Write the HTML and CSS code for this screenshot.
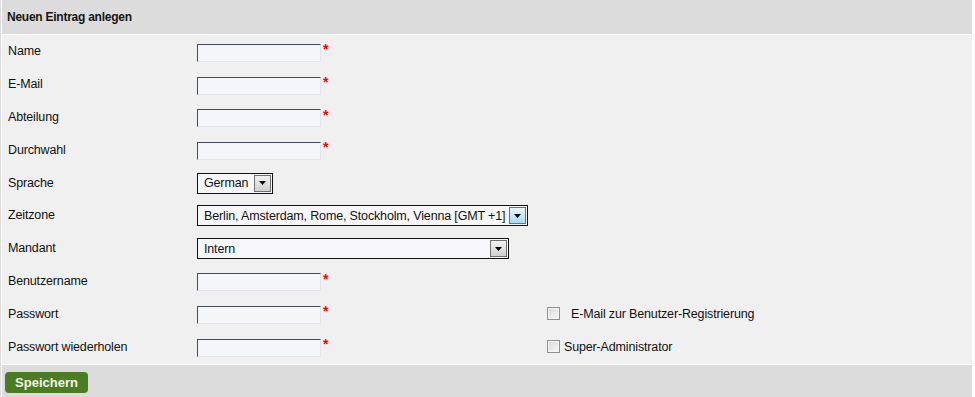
FILE: index.html
```html
<!DOCTYPE html>
<html lang="de">
<head>
<meta charset="utf-8">
<title>Neuen Eintrag anlegen</title>
<link rel="stylesheet" href="styles.css">
</head>
<body>
<div class="panel">
  <div class="head">Neuen Eintrag anlegen</div>
  <div class="form">
    <div class="lbl">Name</div>
    <div class="fld"><span class="inp"></span><span class="req">*</span></div>
    <div class="ext"></div>

    <div class="lbl">E-Mail</div>
    <div class="fld"><span class="inp"></span><span class="req">*</span></div>
    <div class="ext"></div>

    <div class="lbl">Abteilung</div>
    <div class="fld"><span class="inp"></span><span class="req">*</span></div>
    <div class="ext"></div>

    <div class="lbl">Durchwahl</div>
    <div class="fld"><span class="inp"></span><span class="req">*</span></div>
    <div class="ext"></div>

    <div class="lbl">Sprache</div>
    <div class="fld"><div class="sel sel-lang"><span class="sel-text">German</span><span class="sel-btn"><svg width="7" height="4" viewBox="0 0 7 4"><path d="M0 0h7L3.5 4z" fill="#000"/></svg></span></div></div>
    <div class="ext"></div>

    <div class="lbl">Zeitzone</div>
    <div class="fld"><div class="sel sel-tz"><span class="sel-text">Berlin, Amsterdam, Rome, Stockholm, Vienna [GMT +1]</span><span class="sel-btn sel-btn-hot"><svg width="7" height="4" viewBox="0 0 7 4"><path d="M0 0h7L3.5 4z" fill="#000"/></svg></span></div></div>
    <div class="ext"></div>

    <div class="lbl">Mandant</div>
    <div class="fld"><div class="sel sel-mand"><span class="sel-text">Intern</span><span class="sel-btn"><svg width="7" height="4" viewBox="0 0 7 4"><path d="M0 0h7L3.5 4z" fill="#000"/></svg></span></div></div>
    <div class="ext"></div>

    <div class="lbl">Benutzername</div>
    <div class="fld"><span class="inp"></span><span class="req">*</span></div>
    <div class="ext"></div>

    <div class="lbl">Passwort</div>
    <div class="fld"><span class="inp"></span><span class="req">*</span></div>
    <div class="ext"><span class="chk"></span><span class="chk-lbl chk-lbl-wide">E-Mail zur Benutzer-Registrierung</span></div>

    <div class="lbl">Passwort wiederholen</div>
    <div class="fld"><span class="inp"></span><span class="req">*</span></div>
    <div class="ext"><span class="chk"></span><span class="chk-lbl">Super-Administrator</span></div>
  </div>
  <div class="foot"><button class="save" type="button">Speichern</button></div>
</div>
</body>
</html>
```

FILE: styles.css
```css
html, body {
  margin: 0;
  padding: 0;
  background: #ffffff;
}
body {
  font-family: "Liberation Sans", Arial, sans-serif;
  color: #111;
  width: 975px;
  height: 397px;
  overflow: hidden;
  box-sizing: border-box;
  border-left: 1px solid #dcdcdc;
  padding-left: 1px;
}
.panel {
  width: 970px;
  display: flex;
  flex-direction: column;
  gap: 1px;
}
.head {
  height: 34px;
  background: #dcdcdc;
  font-size: 12px;
  font-weight: bold;
  line-height: 34px;
  padding-left: 5px;
  color: #151515;
  letter-spacing: -0.25px;
}
.form {
  background: #f0f0f0;
  display: grid;
  grid-template-columns: 189px 350px 1fr;
  grid-auto-rows: 32.8px;
  height: 329px;
  box-sizing: border-box;
  padding-left: 6px;
  font-size: 12.5px;
  letter-spacing: -0.15px;
}
.lbl {
  display: flex;
  align-items: center;
}
.fld {
  display: flex;
  align-items: center;
}
.inp {
  display: block;
  flex-shrink: 0;
  width: 124px;
  height: 18px;
  box-sizing: border-box;
  margin-top: 3px;
  background: #f5f6fa;
  border-top: 1px solid #454a60;
  border-left: 1px solid #454a60;
  border-right: 1px solid #e3e5ec;
  border-bottom: 1px solid #e3e5ec;
}
.req {
  color: #ff0000;
  font-size: 14px;
  font-weight: bold;
  align-self: flex-start;
  margin-top: 9px;
  margin-left: 2px;
  line-height: 10px;
}
.sel {
  display: flex;
  align-items: center;
  height: 21px;
  box-sizing: border-box;
  border: 1px solid #111;
  background: #f8f8fc;
  padding: 1px;
  margin-top: 1px;
}
.sel-lang { width: 76px; }
.sel-tz { width: 331px; }
.sel-mand { width: 312px; }
.sel-text {
  flex: 1;
  min-width: 0;
  padding-left: 5px;
  white-space: nowrap;
  overflow: hidden;
}
.sel-btn {
  flex-shrink: 0;
  width: 17px;
  height: 17px;
  box-sizing: border-box;
  border: 1px solid #707070;
  background: linear-gradient(#f2f2f2, #d0d0d0);
  display: flex;
  align-items: center;
  justify-content: center;
}
.sel-btn-hot {
  border-color: #3c7fb1;
  background: linear-gradient(#eaf6fd, #a7d9f5);
}
.ext {
  display: flex;
  align-items: center;
}
.chk {
  display: block;
  flex-shrink: 0;
  width: 13px;
  height: 13px;
  box-sizing: border-box;
  border: 1px solid #8e8f8f;
  background: linear-gradient(135deg, #d8d8d8, #f8f8f8);
  box-shadow: inset 0 0 0 1px #f4f4f4;
}
.chk-lbl {
  margin-left: 4px;
}
.chk-lbl-wide {
  margin-left: 11px;
}
.foot {
  height: 33px;
  background: #dcdcdc;
  display: flex;
  align-items: center;
  padding-left: 3px;
}
.save {
  width: 83px;
  height: 21px;
  margin-top: 2px;
  border: 0;
  border-radius: 4px;
  background: #4a7c22;
  color: #f4f4e8;
  font-family: "Liberation Sans", Arial, sans-serif;
  font-weight: bold;
  font-size: 13px;
  padding: 0;
}
```
